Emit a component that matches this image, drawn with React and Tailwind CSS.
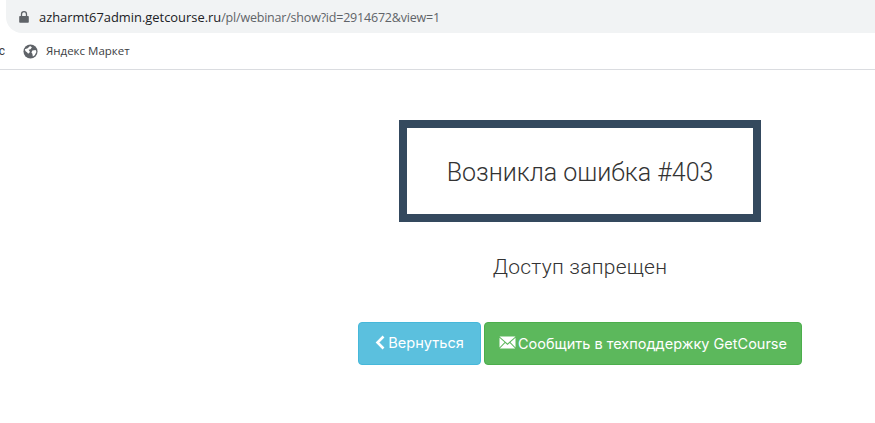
import React from "react";

function Lock() {
  return (
    <svg width="12" height="12" viewBox="0 0 12 12" className="text-[#5f6368]">
      <path fill="currentColor" d="M2 5h8a.8.8 0 0 1 .8.8v5.200a.8.8 0 0 1-.8.8H2a.8.8 0 0 1-.8-.8V5.800A.8.8 0 0 1 2 5z" />
      <path fill="none" stroke="currentColor" strokeWidth="1.300" d="M3.500 5V3.200a2.500 2.500 0 0 1 5 0V5" />
    </svg>
  );
}

function Globe() {
  return (
    <svg width="15" height="15" viewBox="0 0 16 16">
      <circle cx="8" cy="8" r="7.500" fill="#5f6368" />
      <path fill="#fff" d="M2 5.500 5 4.500 7.500 2 9.500 3.500 8 5.500 6 6 7.500 8.500 5.500 10.500 4.500 9 2.500 7.500ZM10 7l3.500-.5.8 2-1.800 3.500-2 1.300-.5-3L9 9Z" />
    </svg>
  );
}

function Envelope() {
  return (
    <svg width="17" height="13" viewBox="0 0 17 13" className="mr-[2px] -mt-[2px]">
      <path fill="#fff" d="M.5.500h16L8.500 7.500ZM.5 1.800l5 4.400L.5 11.500ZM16.500 1.800l-5 4.400 5 5.300ZM6.200 6.900l2.300 2 2.300-2 5.400 5.600H.8Z" />
    </svg>
  );
}

function Chevron() {
  return (
    <svg width="10" height="15" viewBox="0 0 10 15" className="mr-[3px] -mt-[2px]">
      <path fill="none" stroke="#fff" strokeWidth="2.600" d="M8.500 1.500 2.500 7.500l6 6" />
    </svg>
  );
}

export default function App() {
  return (
    <div className="w-[875px] h-[423px] bg-white overflow-hidden font-['Roboto',sans-serif]">
      <div className="h-[70px] border-b border-[#dadce0] flex flex-col">
        <div className="h-[33px] ml-[6px] bg-[#f1f3f4] rounded-bl-[16px] flex items-center pl-[12px]">
          <Lock />
          <div className="ml-[9px] -mt-[1px] whitespace-nowrap font-['Open_Sans','Roboto',sans-serif]">
            <span className="text-[#202124] text-[12.900px]">azharmt67admin.getcourse.ru</span>
            <span className="text-[#5f6368] text-[12.500px] tracking-[-0.2px]">/pl/webinar/show?id=2914672&amp;view=1</span>
          </div>
        </div>
        <div className="flex-1 flex items-center relative">
          <span className="text-[12px] text-[#3c4043] w-[5px] overflow-hidden flex justify-end">с</span>
          <span className="ml-[18px] flex"><Globe /></span>
          <span className="ml-[8px] text-[11.500px] text-[#3c4043] font-['Open_Sans','Roboto',sans-serif]">Яндекс Маркет</span>
        </div>
      </div>

      <div className="ml-[285px] w-[590px] flex flex-col items-center pt-[50px]">
        <div className="w-[362px] h-[102px] border-[8px] border-[#34495e] flex items-center justify-center">
          <span className="text-[25px] font-light text-[#333] pt-[3px]">Возникла ошибка #403</span>
        </div>
        <div className="mt-[30px] text-[21px] leading-[30px] font-light text-[#333] tracking-[0.25px]">Доступ запрещен</div>
        <div className="mt-[40px] flex gap-[3px]">
          <div className="w-[123px] h-[43px] bg-[#5bc0de] border border-[#46b8da] rounded-[4px] flex items-center justify-center text-white text-[14.600px] font-['Inter',sans-serif]">
            <Chevron />
            Вернуться
          </div>
          <div className="w-[318px] h-[43px] bg-[#5cb85c] border border-[#4cae4c] rounded-[4px] flex items-center justify-center text-white text-[14.500px] font-['Inter',sans-serif] whitespace-nowrap">
            <Envelope />
            Сообщить в техподдержку GetCourse
          </div>
        </div>
      </div>
    </div>
  );
}
